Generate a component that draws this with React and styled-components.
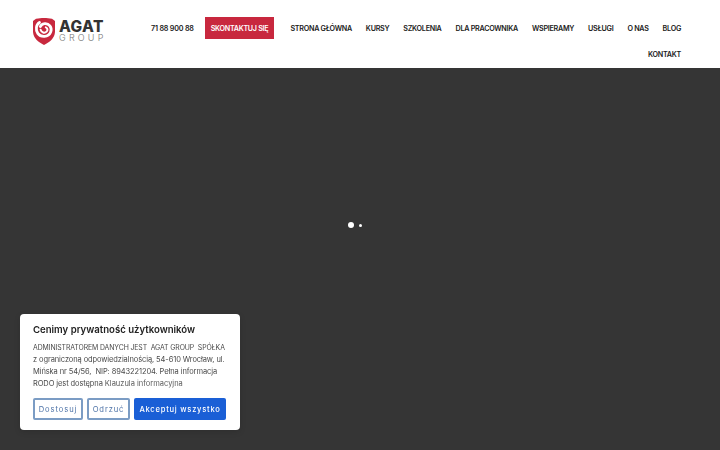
import React from "react";
import styled, { createGlobalStyle } from "styled-components";

const FONT = `"Inter", "Noto Sans", "Liberation Sans", sans-serif`;

const navItems = ["Strona główna", "Kursy", "Szkolenia", "Dla pracownika", "Wspieramy", "Usługi", "O nas", "Blog", "Kontakt"];

const ShieldIcon = () => (
  <svg width="22" height="27" viewBox="0 0 22 27">
    <path d="M3 .8 C6 .3 8 0 11 0 C14 0 16 .3 19 .8 L22 3 L22 14 C21.5 20 17 24 11 27 C5 24 .5 20 0 14 L0 3 Z" fill="#c8283e" />
    <path d="M6.5 4.5 C3 6.5 2.4 12 4.8 15.4 C7.8 19.6 15.4 19.4 17.6 14.2 C19.6 9.4 15.8 5 11.4 5.6 C9.6 5.8 8 7 7.4 8.6" fill="none" stroke="#fff" strokeWidth="2.8" strokeLinecap="round" />
    <path d="M7.6 11.8 C8.4 14.6 11.6 15.6 13.6 13.6 C15 12.2 14.6 10 12.8 9.4" fill="none" stroke="#fff" strokeWidth="2" strokeLinecap="round" />
  </svg>
);

function App() {
  return (
    <>
      <GlobalStyle />
      <Header>
        <Logo>
          <ShieldIcon />
          <LogoText>
            <LogoName>AGAT</LogoName>
            <LogoSub>GROUP</LogoSub>
          </LogoText>
        </Logo>
        <Contact>
          <Phone>71 88 900 88</Phone>
          <ContactButton>Skontaktuj się</ContactButton>
        </Contact>
        <Nav>
          {navItems.map((item) => (
            <NavLink key={item}>{item}</NavLink>
          ))}
        </Nav>
      </Header>
      <Main />
      <Loader>
        <BigDot />
        <SmallDot />
      </Loader>
      <CookieBox>
        <CookieTitle>Cenimy prywatność użytkowników</CookieTitle>
        <CookieText>
          <CapsLine>ADMINISTRATOREM DANYCH JEST &nbsp;AGAT GROUP &nbsp;SPÓŁKA</CapsLine>
          <TextLine>z ograniczoną odpowiedzialnością, 54-610 Wrocław, ul.</TextLine>
          <TextLine>Mińska nr 54/56, &nbsp;NIP: 8943221204. Pełna informacja</TextLine>
          <TextLine>
            RODO jest dostępna <CookieLink>Klauzula informacyjna</CookieLink>
          </TextLine>
        </CookieText>
        <CookieButtons>
          <OutlineButton>Dostosuj</OutlineButton>
          <OutlineButton>Odrzuć</OutlineButton>
          <AcceptButton>Akceptuj wszystko</AcceptButton>
        </CookieButtons>
      </CookieBox>
    </>
  );
}

const GlobalStyle = createGlobalStyle`
  html, body {
    margin: 0;
    height: 100%;
    background: #353535;
    overflow: hidden;
  }
  #root {
    height: 100%;
    display: flex;
    flex-direction: column;
    font-family: ${FONT};
  }
`;
const Header = styled.header`
  align-items: flex-start;
  background: #fff;
  box-sizing: border-box;
  display: flex;
  flex: 0 0 68px;
  padding: 15px 39px 0 33px;
`;
const Logo = styled.div`
  align-items: flex-start;
  display: flex;
  flex: 0 0 118px;
  gap: 4px;
  margin-top: 3px;
`;
const LogoText = styled.div`
  display: flex;
  flex-direction: column;
  margin-top: 2px;
`;
const LogoName = styled.span`
  color: #333;
  font-size: 15.5px;
  font-weight: 800;
  letter-spacing: 0.35px;
  line-height: 13px;
`;
const LogoSub = styled.span`
  color: #777;
  font-size: 9px;
  font-weight: 300;
  letter-spacing: 3.2px;
  line-height: 10px;
`;
const Contact = styled.div`
  align-items: center;
  display: flex;
  flex: 0 0 auto;
  gap: 12px;
  height: 26px;
`;
const Phone = styled.span`
  color: #1a1a1a;
  font-size: 7.2px;
  font-weight: 600;
  letter-spacing: -0.2px;
  white-space: nowrap;
  width: 42px;
`;
const ContactButton = styled.a`
  align-items: center;
  background: #c8283e;
  color: #fff;
  display: flex;
  flex: 0 0 69px;
  font-size: 7.2px;
  font-weight: 600;
  height: 22px;
  justify-content: center;
  letter-spacing: -0.3px;
  text-transform: uppercase;
  white-space: nowrap;
`;
const Nav = styled.nav`
  display: flex;
  flex: 1;
  flex-wrap: wrap;
  justify-content: flex-end;
`;
const NavLink = styled.a`
  align-items: center;
  color: #1a1a1a;
  display: flex;
  font-size: 7.2px;
  font-weight: 600;
  height: 26px;
  letter-spacing: -0.28px;
  margin-left: 14px;
  text-transform: uppercase;
  white-space: nowrap;
`;
const Main = styled.main`
  background: #353535;
  flex: 1;
`;
const Loader = styled.div`
  align-items: center;
  display: flex;
  gap: 4.5px;
  height: 6px;
  left: 348px;
  position: fixed;
  top: 222px;
`;
const BigDot = styled.span`
  background: #fff;
  border-radius: 50%;
  height: 6px;
  width: 6px;
`;
const SmallDot = styled.span`
  background: #fff;
  border-radius: 50%;
  height: 3px;
  width: 3px;
`;
const CookieBox = styled.div`
  background: #fff;
  border-radius: 4px;
  bottom: 20px;
  box-sizing: border-box;
  box-shadow: 0 2px 6px rgba(0, 0, 0, 0.12);
  height: 116px;
  left: 20px;
  padding: 10px 13px 0;
  position: fixed;
  width: 220px;
`;
const CookieTitle = styled.div`
  color: #212121;
  font-size: 9.6px;
  font-weight: 600;
  line-height: 12px;
  margin-bottom: 6px;
  white-space: nowrap;
`;
const CookieText = styled.div`
  color: #4a4a4a;
  white-space: nowrap;
`;
const TextLine = styled.div`
  font-size: 7.5px;
  height: 12px;
  letter-spacing: -0.1px;
  line-height: 12px;
`;
const CapsLine = styled(TextLine)`
  font-size: 6.9px;
`;
const CookieLink = styled.a`
  color: #5c5c5c;
  letter-spacing: 0;
`;
const CookieButtons = styled.div`
  display: grid;
  gap: 4px;
  grid-template-columns: 50px 43px 92px;
  margin-top: 8px;
`;
const OutlineButton = styled.button`
  background: #fff;
  border: 2px solid #7b9cc4;
  border-radius: 2px;
  color: #4f74a8;
  font-family: ${FONT};
  font-size: 7.6px;
  height: 22px;
  letter-spacing: 0.9px;
  padding: 0;
  white-space: nowrap;
`;
const AcceptButton = styled.button`
  background: #1a5fd6;
  border: 0;
  border-radius: 2px;
  color: #fff;
  font-family: ${FONT};
  font-size: 7.6px;
  font-weight: 500;
  height: 22px;
  letter-spacing: 0.75px;
  padding: 0;
  white-space: nowrap;
`;

export default App;
